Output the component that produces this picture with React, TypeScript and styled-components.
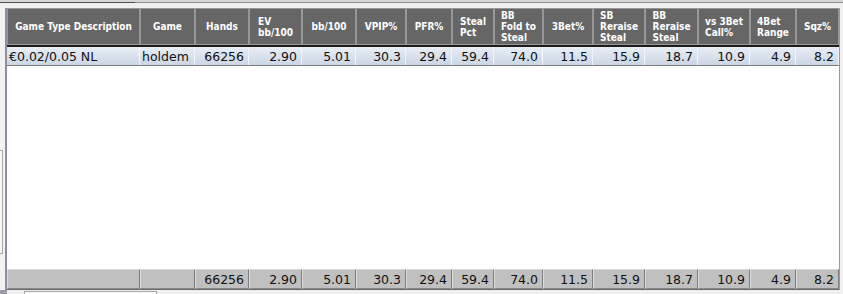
import React from "react";
import styled, { createGlobalStyle } from "styled-components";

const Global = createGlobalStyle`
  html, body { margin: 0; padding: 0; background: #efefef; }
  #root { width: 843px; height: 294px; overflow: hidden; }
`;

const COLS = "133px 55px 54px 53px 54px 50px 46px 42px 49px 50px 52px 53px 52px 46px 43px";

const Page = styled.div`
  width: 843px;
  height: 294px;
  display: flex;
  flex-direction: column;
  background: #efefef;
`;

const TopStrip = styled.div`
  height: 3px;
  display: flex;
`;

const TopSeg = styled.div<{ $dark?: boolean }>`
  box-sizing: border-box;
  height: 3px;
  background: #d6d6d6;
  border-bottom: 1px solid ${(p) => (p.$dark ? "#505050" : "#8c8c8c")};
  ${(p) => (p.$dark ? "width: 135px;" : "flex: 1;")}
`;

const Main = styled.div`
  flex: 1;
  display: flex;
  padding-top: 5px;
  min-height: 0;
`;

const LeftGutter = styled.div`
  width: 5px;
  border-right: 2px solid #8e8e9c;
  background: #f3f3f3;
  display: flex;
  flex-direction: column;
`;

const GutterThumb = styled.div`
  margin-top: 142px;
  width: 2px;
  height: 102px;
  border: 1px solid #a8a8a8;
  border-left: none;
  background: #f8f8f8;
`;

const Table = styled.div`
  width: 832px;
  display: flex;
  flex-direction: column;
`;

const HeaderRow = styled.div`
  display: grid;
  grid-template-columns: ${COLS};
  height: 37px;
  border-bottom: 2px solid #1c1c1c;
`;

const HeadCell = styled.div`
  box-sizing: border-box;
  background: #666666;
  border: 1px solid #979797;
  display: flex;
  align-items: center;
  justify-content: center;
  overflow: hidden;
`;

const HeadText = styled.span`
  font-family: "DejaVu Sans Condensed", "DejaVu Sans", sans-serif;
  font-weight: bold;
  font-size: 10px;
  line-height: 11px;
  color: #ffffff;
  white-space: pre-line;
  text-align: left;
`;

const DataRow = styled.div`
  display: grid;
  grid-template-columns: ${COLS};
  height: 18px;
  border-bottom: 1px solid #7c7c7c;
  background: linear-gradient(#e9eef5, #cbd6e4);
`;

const DataCell = styled.div<{ $left?: boolean }>`
  box-sizing: border-box;
  border-right: 1px solid #f2f5f9;
  display: flex;
  align-items: center;
  justify-content: ${(p) => (p.$left ? "flex-start" : "flex-end")};
  padding: ${(p) => (p.$left ? "0 0 0 2px" : "0 4px 0 0")};
  font-family: "DejaVu Sans", sans-serif;
  font-size: 12.5px;
  color: #111111;
  white-space: nowrap;
  overflow: hidden;
`;

const Filler = styled.div`
  flex: 1;
  background: #ffffff;
`;

const FooterRow = styled.div`
  display: grid;
  grid-template-columns: ${COLS};
  height: 20px;
  border-bottom: 1px solid #686868;
`;

const FootCell = styled.div`
  box-sizing: border-box;
  background: #c0c0c0;
  border-top: 1px solid #d8d8d8;
  border-left: 1px solid #dcdcdc;
  border-right: 1px solid #7e7e7e;
  border-bottom: 1px solid #8a8a8a;
  display: flex;
  align-items: center;
  justify-content: flex-end;
  padding-right: 4px;
  font-family: "DejaVu Sans", sans-serif;
  font-size: 12.5px;
  color: #111111;
  white-space: nowrap;
  overflow: hidden;
`;

const RightEdge = styled.div`
  flex: 1;
  border-left: 1px solid #9a9a9a;
  background: #f0f0f0;
`;

const BottomStrip = styled.div`
  height: 4px;
  display: flex;
  background: #f0f0f0;
`;

const BottomCorner = styled.div`
  width: 7px;
  background: #9a9aa6;
`;

const HScrollThumb = styled.div`
  margin-left: 17px;
  margin-top: 1px;
  width: 131px;
  border: 1px solid #a6a6a6;
  border-bottom: none;
  background: #fafafa;
`;

const headers = [
  "Game Type Description",
  "Game",
  "Hands",
  "EV\nbb/100",
  "bb/100",
  "VPIP%",
  "PFR%",
  "Steal\nPct",
  "BB\nFold to\nSteal",
  "3Bet%",
  "SB\nReraise\nSteal",
  "BB\nReraise\nSteal",
  "vs 3Bet\nCall%",
  "4Bet\nRange",
  "Sqz%",
];

const stats = ["66256", "2.90", "5.01", "30.3", "29.4", "59.4", "74.0", "11.5", "15.9", "18.7", "10.9", "4.9", "8.2"];
const row = ["€0.02/0.05 NL", "holdem", ...stats];
const footer = ["", "", ...stats];

export default function App() {
  return (
    <>
      <Global />
      <Page>
        <TopStrip>
          <TopSeg $dark />
          <TopSeg />
        </TopStrip>
        <Main>
          <LeftGutter>
            <GutterThumb />
          </LeftGutter>
          <Table>
            <HeaderRow>
              {headers.map((h) => (
                <HeadCell key={h}>
                  <HeadText>{h}</HeadText>
                </HeadCell>
              ))}
            </HeaderRow>
            <DataRow>
              {row.map((v, i) => (
                <DataCell key={i} $left={i < 2}>
                  {v}
                </DataCell>
              ))}
            </DataRow>
            <Filler />
            <FooterRow>
              {footer.map((v, i) => (
                <FootCell key={i}>{v}</FootCell>
              ))}
            </FooterRow>
          </Table>
          <RightEdge />
        </Main>
        <BottomStrip>
          <BottomCorner />
          <HScrollThumb />
        </BottomStrip>
      </Page>
    </>
  );
}
